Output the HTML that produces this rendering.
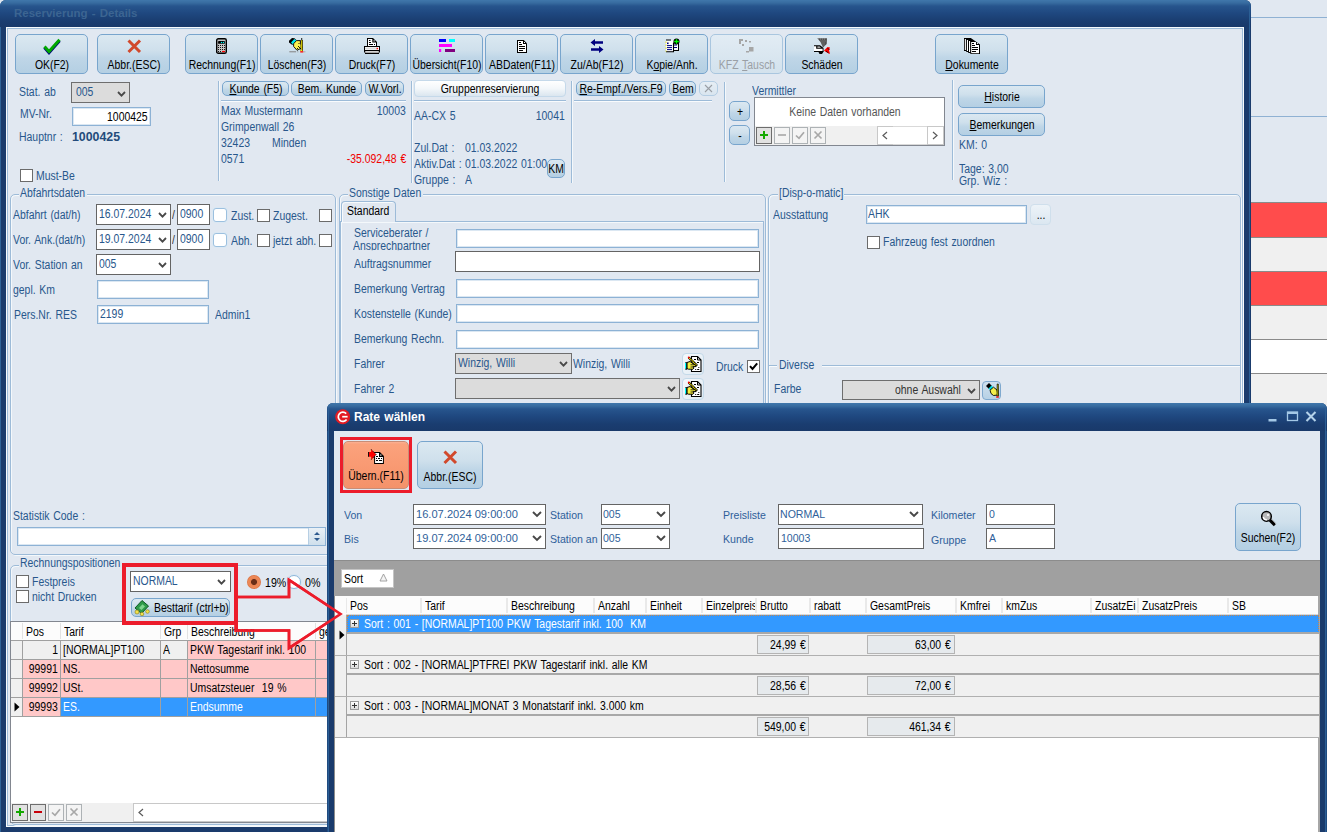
<!DOCTYPE html>
<html><head><meta charset="utf-8"><title>Reservierung - Details</title>
<style>
html,body{margin:0;padding:0}
body{width:1327px;height:832px;overflow:hidden;position:relative;background:#e1e8f1;font-family:"Liberation Sans",sans-serif}
div,span,svg{position:absolute;box-sizing:border-box}
.t{white-space:nowrap;font-family:"Liberation Sans",sans-serif;word-spacing:1px}
.btn{border:1px solid #78a5cd;border-radius:5px;background:linear-gradient(#dbe8f1 0%,#cfe0ec 40%,#bfd6e7 60%,#b4cfe3 100%)}
.btnw{border:1px solid #c5d9ea;border-radius:4px;background:linear-gradient(#ffffff 0%,#f3f7fa 50%,#dbe6ef 100%)}
.inp{background:#fff;border:1px solid #8db2d5;box-shadow:inset 0 0 0 1px #dbe7f2}
.inpd{background:#fff;border:1px solid #646464}
.sel{background:#fff;border:1px solid #646464}
.selg{background:#dcdcdc;border:1px solid #6e6e6e}
.cb{background:#fff;border:1px solid #6b6b6b}
.cbb{background:#fff;border:1px solid #9cc0df;border-radius:3px;box-shadow:0 0 0 1px #dbe8f3}
.grp{border:1px solid #9dbbd8;border-radius:5px;box-shadow:inset 1px 1px 0 #f4f8fb, 1px 1px 0 #f4f8fb}
</style></head><body>
<div style="left:1251px;top:17px;width:76px;height:1px;background:#8fb1d3;"></div>
<div style="left:1251px;top:116px;width:76px;height:1px;background:#8fb1d3;"></div>
<div style="left:1251px;top:202px;width:76px;height:1px;background:#8a8a8a;"></div>
<div style="left:1251px;top:203px;width:76px;height:34px;background:#ff4c4c;"></div>
<div style="left:1251px;top:237px;width:76px;height:1px;background:#8a8a8a;"></div>
<div style="left:1251px;top:238px;width:76px;height:33px;background:#f0f0f0;"></div>
<div style="left:1251px;top:271px;width:76px;height:1px;background:#8a8a8a;"></div>
<div style="left:1251px;top:272px;width:76px;height:33px;background:#ff4c4c;"></div>
<div style="left:1251px;top:305px;width:76px;height:1px;background:#8a8a8a;"></div>
<div style="left:1251px;top:306px;width:76px;height:33px;background:#f0f0f0;"></div>
<div style="left:1251px;top:339px;width:76px;height:1px;background:#8a8a8a;"></div>
<div style="left:1251px;top:340px;width:76px;height:33px;background:#ffffff;"></div>
<div style="left:1251px;top:373px;width:76px;height:1px;background:#8a8a8a;"></div>
<div style="left:1251px;top:374px;width:76px;height:40px;background:#f0f0f0;"></div>
<div style="left:0px;top:0px;width:1251px;height:832px;background:#1a3b6c;border-radius:6px 6px 0 0;border-left:1px solid #2f6398;"></div>
<div style="left:0px;top:0px;width:1251px;height:27px;border-radius:6px 6px 0 0;background:linear-gradient(#4077ab 0px,#376b9f 3px,#27558d 6px,#1f4880 13px,#1a3d70 21px,#19396a 27px);"></div>
<span class="t" style="top:6.5px;font-size:11.5px;line-height:13px;color:#3c6592;font-weight:bold;left:14px;transform:scaleX(1.0);transform-origin:0 0;">Reservierung - Details</span>
<div style="left:1249px;top:4px;width:1px;height:828px;background:#2b5f95;"></div>
<div style="left:6px;top:27px;width:1238px;height:800px;background:#e1e8f1;border:1px solid #f7fafc;box-shadow:inset 0 0 0 1px #9dbbd8;"></div>
<div class="btn" style="left:15px;top:34px;width:73px;height:40px;"></div>
<span class="t" style="top:57.7px;font-size:12.5px;line-height:14px;color:#000;left:-148.5px;width:400px;text-align:center;transform:scaleX(0.835);transform-origin:50% 0;">OK(F2)</span>
<svg style="left:40px;top:38px" width="22" height="17" viewBox="0 0 22 17"><polyline points="4.5,8.5 9,13.5 19.5,1.8" fill="none" stroke="#000080" stroke-width="3.2" transform="translate(0,1)"/><polyline points="4.5,8.5 9,13.5 19.5,1.8" fill="none" stroke="#00a800" stroke-width="3"/></svg>
<div class="btn" style="left:97px;top:34px;width:73px;height:40px;"></div>
<span class="t" style="top:57.7px;font-size:12.5px;line-height:14px;color:#000;left:-66.5px;width:400px;text-align:center;transform:scaleX(0.835);transform-origin:50% 0;">Abbr.(ESC)</span>
<svg style="left:127px;top:39px" width="15" height="15" viewBox="0 0 15 15"><path d="M1.5 1.5 L13 13 M13 1.5 L1.5 13" stroke="#d1492c" stroke-width="3" fill="none"/></svg>
<div class="btn" style="left:185px;top:34px;width:73px;height:40px;"></div>
<span class="t" style="top:57.7px;font-size:12.5px;line-height:14px;color:#000;left:21.5px;width:400px;text-align:center;transform:scaleX(0.835);transform-origin:50% 0;">Rechnung(F1)</span>
<svg style="left:216px;top:38px" width="11" height="16" viewBox="0 0 11 16"><rect x=".7" y=".7" width="9.6" height="14.6" rx="1.6" fill="#c6c6c6" stroke="#000" stroke-width="1.4"/><rect x="2.1" y="3.1" width="6.8" height="2.7" rx=".4" fill="#000"/><rect x="4.9" y="3.9" width="1.2" height="1.2" fill="#0ff"/><rect x="6.9" y="3.9" width="1.2" height="1.2" fill="#0ff"/><rect x="2" y="7" width="1" height="1" fill="#111"/><rect x="2" y="9" width="1" height="1" fill="#111"/><rect x="2" y="11" width="1" height="1" fill="#111"/><rect x="4" y="7" width="1" height="1" fill="#111"/><rect x="4" y="9" width="1" height="1" fill="#111"/><rect x="4" y="11" width="1" height="1" fill="#111"/><rect x="6" y="7" width="1" height="1" fill="#111"/><rect x="6" y="9" width="1" height="1" fill="#111"/><rect x="6" y="11" width="1" height="1" fill="#111"/><rect x="8" y="7" width="1" height="1" fill="#111"/><rect x="8" y="9" width="1" height="1" fill="#111"/><rect x="8" y="11" width="1" height="1" fill="#111"/><rect x="2" y="13" width="1" height="1" fill="#111"/><rect x="4" y="13" width="1" height="1" fill="#111"/><rect x="6" y="12.9" width="3" height="1.2" fill="#f00"/></svg>
<div class="btn" style="left:260px;top:34px;width:73px;height:40px;"></div>
<span class="t" style="top:57.7px;font-size:12.5px;line-height:14px;color:#000;left:96.5px;width:400px;text-align:center;transform:scaleX(0.835);transform-origin:50% 0;">L&ouml;schen(F3)</span>
<svg style="left:289px;top:38px" width="17" height="16" viewBox="0 0 17 16"><path d="M0 2.8 L3 0 L5.5 .3 L7.3 2 L3.3 7 L0 4.5 Z" fill="#000"/><path d="M5.3 .9 L7.6 2.6 L3.9 6.5 L2 4.6 Z" fill="#00e8f0"/><path d="M7.4 2.6 H11.3 V4.2 L13.4 9.6 L8 12.3 L4.6 8.4 V5.8 Z" fill="#fbf250" stroke="#000" stroke-width=".9"/><path d="M9.5 5 L10.5 6 M9 8 L11.5 10.5 M8 10 L9 11" stroke="#000" stroke-width=".9"/><path d="M11.6 2 H13.9 V13 H11.6 Z" fill="#000"/><rect x="12.2" y="2.2" width="1.1" height="9.8" fill="#ffee00"/><rect x="12.3" y="0" width=".9" height="2" fill="#000"/><rect x="11.6" y="12" width="1.8" height="1.2" fill="#ffee00"/><rect x="11.2" y="13.2" width="3.2" height="1.3" fill="#f00"/><rect x=".3" y="13.3" width="6.8" height="1" fill="#808080"/><rect x="8.4" y="13.4" width=".9" height=".9" fill="#808080"/><rect x="15.4" y="13.4" width=".9" height=".9" fill="#808080"/></svg>
<div class="btn" style="left:335px;top:34px;width:73px;height:40px;"></div>
<span class="t" style="top:57.7px;font-size:12.5px;line-height:14px;color:#000;left:171.5px;width:400px;text-align:center;transform:scaleX(0.835);transform-origin:50% 0;">Druck(F7)</span>
<svg style="left:364px;top:38px" width="16" height="16" viewBox="0 0 16 16"><path d="M3 0 H9 L13 4 V9 H3 Z" fill="#000"/><path d="M4 1 H8.3 V4.6 H12 V8.5 H4 Z" fill="#fff"/><rect x="9.5" y="2.3" width="1.2" height="1.2" fill="#fff"/><path d="M5 2.5 h1.5 M5 4.5 h2 M5 6.5 h4 M10 6.5 h1" stroke="#000" stroke-width="1"/><path d="M0 8 H16 V14.5 H15 V16 H1 V14.5 H0 Z" fill="#000"/><rect x="1" y="9" width="14" height="3" fill="#fff"/><path d="M1.5 10.5 H12.5" stroke="#bbb" stroke-width="2" stroke-dasharray="1 1"/><rect x="12.6" y="9.8" width="1.5" height="1.5" fill="#f00"/><rect x="1.2" y="13" width="13.6" height="1.8" fill="#d4d4d4"/></svg>
<div class="btn" style="left:410px;top:34px;width:73px;height:40px;"></div>
<span class="t" style="top:57.7px;font-size:12.5px;line-height:14px;color:#000;left:246.5px;width:400px;text-align:center;transform:scaleX(0.835);transform-origin:50% 0;">&Uuml;bersicht(F10)</span>
<svg style="left:438px;top:38px" width="18" height="15" viewBox="0 0 18 15"><rect x="1" y="1" width="7" height="3" fill="#00f"/><rect x="11" y="1" width="6" height="3" fill="#0ff"/><rect x="1" y="6" width="13" height="3" fill="#f0f"/><rect x="1" y="11" width="2.2" height="3" fill="#f0f"/><rect x="7" y="11" width="10" height="3" fill="#800080"/></svg>
<div class="btn" style="left:485px;top:34px;width:73px;height:40px;"></div>
<span class="t" style="top:57.7px;font-size:12.5px;line-height:14px;color:#000;left:321.5px;width:400px;text-align:center;transform:scaleX(0.835);transform-origin:50% 0;">ABDaten(F11)</span>
<svg style="left:517px;top:40px" width="10" height="13" viewBox="0 0 10 13"><path d="M0 0 H6.8 L10 3.5 V13 H0 Z" fill="#000"/><path d="M1 1 H6 V4 H9 V12 H1 Z" fill="#fff"/><rect x="7" y="2" width="1" height="1" fill="#fff"/><path d="M2 2.5 h2 M2 4.5 h3 M2 6.5 h6 M2 8.5 h6 M2 10.5 h4" stroke="#000" stroke-width="1"/></svg>
<div class="btn" style="left:560px;top:34px;width:73px;height:40px;"></div>
<span class="t" style="top:57.7px;font-size:12.5px;line-height:14px;color:#000;left:396.5px;width:400px;text-align:center;transform:scaleX(0.835);transform-origin:50% 0;">Zu/Ab(F12)</span>
<svg style="left:590px;top:39px" width="14" height="14" viewBox="0 0 14 14"><path d="M0.5 3.5 L5 0 V2.2 H13 V4.8 H5 V7 Z" fill="#000080"/><path d="M13.5 10.5 L9 7 V9.2 H1 V11.8 H9 V14 Z" fill="#000080"/></svg>
<div class="btn" style="left:635px;top:34px;width:73px;height:40px;"></div>
<span class="t" style="top:57.7px;font-size:12.5px;line-height:14px;color:#000;left:471.5px;width:400px;text-align:center;transform:scaleX(0.835);transform-origin:50% 0;">K<u>o</u>pie/Anh.</span>
<svg style="left:665px;top:38px" width="16" height="16" viewBox="0 0 16 16"><rect x="6.5" y="4.5" width="7" height="8" fill="#fff" stroke="#000" stroke-width="1"/><path d="M8 7 h4 M8 9.5 h4" stroke="#000080" stroke-width="1"/><rect x="1" y="2.5" width="7.5" height="11" fill="#fff"/><path d="M1 2 H6 M8.5 5 V13.8 H1" fill="none" stroke="#000" stroke-width="1.1"/><rect x="2" y="4.5" width="1.6" height="1.6" fill="#000080"/><path d="M2 7.6 h5 M2 9.6 h5 M2 11.6 h5" stroke="#000080" stroke-width="1"/><path d="M1 3.5 v10" stroke="#f0e000" stroke-width="1" stroke-dasharray="1.5 1.5"/><circle cx="11.5" cy="3.5" r="3" fill="#000"/><path d="M11.5 1.2 v4.6 M9.2 3.5 h4.6" stroke="#0f0" stroke-width="1.3"/></svg>
<div class="btn" style="left:710px;top:34px;width:73px;height:40px;background:linear-gradient(#e2ecf4,#d3e2ed);border-color:#a9c6df;"></div>
<span class="t" style="top:57.7px;font-size:12.5px;line-height:14px;color:#9a9fa5;left:546.5px;width:400px;text-align:center;transform:scaleX(0.835);transform-origin:50% 0;">KFZ <u>T</u>ausch</span>
<svg style="left:737px;top:38px" width="18" height="16" viewBox="0 0 18 16"><path d="M2 1 H6 V3 H4 V6 H2 Z M8 2 h2 v2 h-2z M12 3 h2 v1.5 h-2z" fill="#a6a6a6"/><path d="M12 9 H16.5 V13.5 H12 Z M9 13 h3 v1.5 h-3z M5 6 h2 v2 h-2z" fill="#a6a6a6"/></svg>
<div class="btn" style="left:785px;top:34px;width:73px;height:40px;"></div>
<span class="t" style="top:57.7px;font-size:12.5px;line-height:14px;color:#000;left:621.5px;width:400px;text-align:center;transform:scaleX(0.835);transform-origin:50% 0;">Sch&auml;den</span>
<svg style="left:814px;top:38px" width="16" height="16" viewBox="0 0 16 16"><path d="M3.3 .3 H13 L12.7 6 L9 9.5 L6.5 4 Z" fill="#4e4e4e"/><path d="M4 1 h8 M6.5 3 l5 0 M7.5 5 l4 0 M8.5 7 l2.5 0" stroke="#aaa" stroke-width=".8" stroke-dasharray="1 1"/><path d="M0 7.2 H6 L9.5 10 V13 H10 L8 16 H5.5 L4.5 14 H0 Z" fill="#000"/><path d="M0 8.2 H2.2 V10.8 H8.6 V12.9 H0 Z" fill="#fff"/><path d="M3.4 8.6 H5.6 L7 9.8 H3.4 Z" fill="#ddd"/><path d="M10 12.5 L13.5 9 L16 9.5 L15 12 L16 16 L13 14.5 L11.5 13.8 Z" fill="#f00"/><path d="M13.5 10 L15.5 12 M12 13 L14.5 15" stroke="#300" stroke-width=".9"/></svg>
<div class="btn" style="left:935px;top:34px;width:73px;height:40px;"></div>
<span class="t" style="top:57.7px;font-size:12.5px;line-height:14px;color:#000;left:771.5px;width:400px;text-align:center;transform:scaleX(0.835);transform-origin:50% 0;"><u>D</u>okumente</span>
<svg style="left:964px;top:38px" width="16" height="16" viewBox="0 0 16 16"><path d="M0 0 H6.8 L16 6.5 V16 H6.4 V15 H4.2 V14 H2.2 V13 H0 Z" fill="#000"/><rect x=".8" y="1" width="1.1" height="11" fill="#fff"/><rect x="2.9" y="2" width="1.1" height="11" fill="#fff"/><rect x="5" y="3" width="1.1" height="11" fill="#fff"/><path d="M7.2 4 H12 V7 H15 V15.2 H7.2 Z" fill="#fff"/><rect x="12.9" y="5" width="1" height="1" fill="#fff"/><path d="M8 5.5 h2 M8 7.5 h3 M8 9.5 h6 M8 11.5 h6 M8 13.5 h4" stroke="#000" stroke-width="1"/></svg>
<span class="t" style="top:84.7px;font-size:12.5px;line-height:14px;color:#28578c;left:19px;transform:scaleX(0.835);transform-origin:0 0;">Stat. ab</span>
<div class="selg" style="left:71px;top:82px;width:59px;height:21px;"></div>
<span class="t" style="top:84.7px;font-size:12.5px;line-height:14px;color:#28578c;left:76px;transform:scaleX(0.835);transform-origin:0 0;">005</span>
<svg style="left:117px;top:91px" width="9" height="6" viewBox="0 0 9 6"><path d="M1 1 L4.5 4.6 L8 1" fill="none" stroke="#484848" stroke-width="1.8"/></svg>
<span class="t" style="top:106.7px;font-size:12.5px;line-height:14px;color:#28578c;left:19.5px;transform:scaleX(0.835);transform-origin:0 0;">MV-Nr.</span>
<div class="inp" style="left:72px;top:107px;width:79px;height:19px;"></div>
<span class="t" style="top:109.7px;font-size:12.5px;line-height:14px;color:#000;right:1179px;transform:scaleX(0.835);transform-origin:100% 0;">1000425</span>
<span class="t" style="top:129.7px;font-size:12.5px;line-height:14px;color:#28578c;left:19px;transform:scaleX(0.835);transform-origin:0 0;">Hauptnr :</span>
<span class="t" style="top:129.0px;font-size:13px;line-height:15px;color:#234b7b;font-weight:bold;left:72px;transform:scaleX(0.95);transform-origin:0 0;">1000425</span>
<div class="cb" style="left:20px;top:169px;width:13px;height:13px;"></div>
<span class="t" style="top:168.7px;font-size:12.5px;line-height:14px;color:#28578c;left:36px;transform:scaleX(0.835);transform-origin:0 0;">Must-Be</span>
<div style="left:218px;top:81px;width:1px;height:100px;background:#9dbbd8;"></div>
<div style="left:219px;top:81px;width:1px;height:100px;background:#f4f8fb;"></div>
<div class="btn" style="left:222px;top:81px;width:67px;height:15px;"></div>
<span class="t" style="top:81.7px;font-size:12.5px;line-height:14px;color:#000;left:55.5px;width:400px;text-align:center;transform:scaleX(0.835);transform-origin:50% 0;"><u>K</u>unde (F5)</span>
<div class="btn" style="left:291px;top:81px;width:71px;height:15px;"></div>
<span class="t" style="top:81.7px;font-size:12.5px;line-height:14px;color:#000;left:126.5px;width:400px;text-align:center;transform:scaleX(0.835);transform-origin:50% 0;">Bem. Kunde</span>
<div class="btn" style="left:365px;top:81px;width:39px;height:15px;"></div>
<span class="t" style="top:81.7px;font-size:12.5px;line-height:14px;color:#000;left:184.5px;width:400px;text-align:center;transform:scaleX(0.835);transform-origin:50% 0;">W.Vorl.</span>
<div style="left:221px;top:100px;width:185px;height:1px;background:#9dbbd8;"></div>
<div style="left:221px;top:101px;width:185px;height:1px;background:#f9fbfd;"></div>
<span class="t" style="top:103.7px;font-size:12.5px;line-height:14px;color:#28578c;left:221px;transform:scaleX(0.835);transform-origin:0 0;">Max Mustermann</span>
<span class="t" style="top:103.7px;font-size:12.5px;line-height:14px;color:#28578c;right:921px;transform:scaleX(0.835);transform-origin:100% 0;">10003</span>
<span class="t" style="top:119.7px;font-size:12.5px;line-height:14px;color:#28578c;left:221px;transform:scaleX(0.835);transform-origin:0 0;">Grimpenwall 26</span>
<span class="t" style="top:135.7px;font-size:12.5px;line-height:14px;color:#28578c;left:221px;transform:scaleX(0.835);transform-origin:0 0;">32423</span>
<span class="t" style="top:135.7px;font-size:12.5px;line-height:14px;color:#28578c;left:272px;transform:scaleX(0.835);transform-origin:0 0;">Minden</span>
<span class="t" style="top:151.7px;font-size:12.5px;line-height:14px;color:#28578c;left:221px;transform:scaleX(0.835);transform-origin:0 0;">0571</span>
<span class="t" style="top:151.7px;font-size:12.5px;line-height:14px;color:#f00000;right:921px;transform:scaleX(0.835);transform-origin:100% 0;">-35.092,48 &euro;</span>
<div style="left:411px;top:81px;width:1px;height:102px;background:#9dbbd8;"></div>
<div style="left:412px;top:81px;width:1px;height:102px;background:#f4f8fb;"></div>
<div class="btnw" style="left:414px;top:80px;width:152px;height:17px;"></div>
<span class="t" style="top:81.7px;font-size:12.5px;line-height:14px;color:#000;left:290.0px;width:400px;text-align:center;transform:scaleX(0.835);transform-origin:50% 0;">Gruppenreservierung</span>
<div style="left:414px;top:100px;width:152px;height:1px;background:#9dbbd8;"></div>
<div style="left:414px;top:101px;width:152px;height:1px;background:#f9fbfd;"></div>
<span class="t" style="top:108.7px;font-size:12.5px;line-height:14px;color:#28578c;left:414px;transform:scaleX(0.835);transform-origin:0 0;">AA-CX 5</span>
<span class="t" style="top:108.7px;font-size:12.5px;line-height:14px;color:#28578c;right:762px;transform:scaleX(0.835);transform-origin:100% 0;">10041</span>
<span class="t" style="top:140.7px;font-size:12.5px;line-height:14px;color:#28578c;left:414px;transform:scaleX(0.835);transform-origin:0 0;">Zul.Dat :</span>
<span class="t" style="top:140.7px;font-size:12.5px;line-height:14px;color:#28578c;left:465px;transform:scaleX(0.835);transform-origin:0 0;">01.03.2022</span>
<span class="t" style="top:156.7px;font-size:12.5px;line-height:14px;color:#28578c;left:414px;transform:scaleX(0.835);transform-origin:0 0;">Aktiv.Dat :</span>
<span class="t" style="top:156.7px;font-size:12.5px;line-height:14px;color:#28578c;left:465px;transform:scaleX(0.835);transform-origin:0 0;">01.03.2022 01:00</span>
<span class="t" style="top:172.7px;font-size:12.5px;line-height:14px;color:#28578c;left:414px;transform:scaleX(0.835);transform-origin:0 0;">Gruppe :</span>
<span class="t" style="top:172.7px;font-size:12.5px;line-height:14px;color:#28578c;left:465px;transform:scaleX(0.835);transform-origin:0 0;">A</span>
<div class="btn" style="left:547px;top:159px;width:18px;height:19px;"></div>
<span class="t" style="top:161.7px;font-size:12.5px;line-height:14px;color:#000;left:356.0px;width:400px;text-align:center;transform:scaleX(0.835);transform-origin:50% 0;">KM</span>
<div style="left:571px;top:81px;width:1px;height:102px;background:#9dbbd8;"></div>
<div style="left:572px;top:81px;width:1px;height:102px;background:#f4f8fb;"></div>
<div class="btn" style="left:576px;top:81px;width:90px;height:15px;"></div>
<span class="t" style="top:81.7px;font-size:12.5px;line-height:14px;color:#000;left:421.0px;width:400px;text-align:center;transform:scaleX(0.835);transform-origin:50% 0;"><u>R</u>e-Empf./Vers.F9</span>
<div class="btn" style="left:669px;top:81px;width:27px;height:15px;"></div>
<span class="t" style="top:81.7px;font-size:12.5px;line-height:14px;color:#000;left:482.5px;width:400px;text-align:center;transform:scaleX(0.835);transform-origin:50% 0;">Bem</span>
<div class="btn" style="left:699px;top:81px;width:19px;height:15px;background:linear-gradient(#e6eef5,#d9e5ef);border-color:#b4cde3;"></div>
<svg style="left:704px;top:84px" width="9" height="9" viewBox="0 0 9 9"><path d="M1 1 L8 8 M8 1 L1 8" stroke="#9a9fa5" stroke-width="1.1" fill="none"/></svg>
<div style="left:574px;top:100px;width:138px;height:1px;background:#9dbbd8;"></div>
<div style="left:574px;top:101px;width:138px;height:1px;background:#f9fbfd;"></div>
<div style="left:724px;top:82px;width:1px;height:100px;background:#9dbbd8;"></div>
<div style="left:725px;top:82px;width:1px;height:100px;background:#f4f8fb;"></div>
<span class="t" style="top:83.7px;font-size:12.5px;line-height:14px;color:#28578c;left:752px;transform:scaleX(0.835);transform-origin:0 0;">Vermittler</span>
<div class="btn" style="left:729px;top:101px;width:21px;height:20px;"></div>
<span class="t" style="top:104.7px;font-size:12.5px;line-height:14px;color:#000;left:539.5px;width:400px;text-align:center;transform:scaleX(0.835);transform-origin:50% 0;">+</span>
<div class="btn" style="left:729px;top:125px;width:21px;height:20px;"></div>
<span class="t" style="top:128.7px;font-size:12.5px;line-height:14px;color:#000;left:539.5px;width:400px;text-align:center;transform:scaleX(0.835);transform-origin:50% 0;">-</span>
<div style="left:754px;top:97px;width:191px;height:49px;background:#fff;border:1px solid #828790;"></div>
<span class="t" style="top:104.7px;font-size:12.5px;line-height:14px;color:#555;left:645px;width:400px;text-align:center;transform:scaleX(0.835);transform-origin:50% 0;">Keine Daten vorhanden</span>
<div style="left:755px;top:126px;width:189px;height:19px;background:#f0f0f0;"></div>
<div style="left:756px;top:127px;width:16px;height:17px;background:#e1e1e1;border:1px solid #6d6d6d;"></div>
<svg style="left:759px;top:130px" width="10" height="10" viewBox="0 0 10 10"><path d="M5 1 V9 M1 5 H9" stroke="#14a800" stroke-width="2" fill="none"/></svg>
<div style="left:774px;top:127px;width:16px;height:17px;background:#f4f4f4;border:1px solid #adb2b5;"></div>
<svg style="left:777px;top:130px" width="10" height="10" viewBox="0 0 10 10"><path d="M1 5 H9" stroke="#a8a8a8" stroke-width="1.6" fill="none"/></svg>
<div style="left:792px;top:127px;width:16px;height:17px;background:#f4f4f4;border:1px solid #adb2b5;"></div>
<svg style="left:795px;top:130px" width="10" height="10" viewBox="0 0 10 10"><path d="M1 5.5 L4 8.3 L9 2.2" stroke="#a8a8a8" stroke-width="1.7" fill="none"/></svg>
<div style="left:810px;top:127px;width:16px;height:17px;background:#f4f4f4;border:1px solid #adb2b5;"></div>
<svg style="left:813px;top:130px" width="10" height="10" viewBox="0 0 10 10"><path d="M1.5 1.5 L8.5 8.5 M8.5 1.5 L1.5 8.5" stroke="#a8a8a8" stroke-width="1.7" fill="none"/></svg>
<div style="left:877px;top:126px;width:17px;height:19px;background:#fff;border:1px solid #c8c8c8;"></div>
<svg style="left:881px;top:131px" width="8" height="9" viewBox="0 0 8 9"><path d="M6 1 L2 4.5 L6 8" stroke="#5a5a5a" stroke-width="1.2" fill="none"/></svg>
<div style="left:893px;top:126px;width:35px;height:19px;background:#fff;border-top:1px solid #d9d9d9;border-bottom:1px solid #d9d9d9;"></div>
<div style="left:927px;top:126px;width:17px;height:19px;background:#fff;border:1px solid #c8c8c8;"></div>
<svg style="left:931px;top:131px" width="8" height="9" viewBox="0 0 8 9"><path d="M2 1 L6 4.5 L2 8" stroke="#5a5a5a" stroke-width="1.2" fill="none"/></svg>
<div style="left:952px;top:80px;width:1px;height:100px;background:#9dbbd8;"></div>
<div style="left:953px;top:80px;width:1px;height:100px;background:#f4f8fb;"></div>
<div class="btn" style="left:958px;top:85px;width:87px;height:23px;"></div>
<span class="t" style="top:89.7px;font-size:12.5px;line-height:14px;color:#000;left:801.5px;width:400px;text-align:center;transform:scaleX(0.835);transform-origin:50% 0;"><u>H</u>istorie</span>
<div class="btn" style="left:958px;top:113px;width:87px;height:23px;"></div>
<span class="t" style="top:117.7px;font-size:12.5px;line-height:14px;color:#000;left:801.5px;width:400px;text-align:center;transform:scaleX(0.835);transform-origin:50% 0;"><u>B</u>emerkungen</span>
<span class="t" style="top:137.7px;font-size:12.5px;line-height:14px;color:#28578c;left:959px;transform:scaleX(0.835);transform-origin:0 0;">KM: 0</span>
<span class="t" style="top:161.7px;font-size:12.5px;line-height:14px;color:#28578c;left:959px;transform:scaleX(0.835);transform-origin:0 0;">Tage: 3,00</span>
<span class="t" style="top:173.7px;font-size:12.5px;line-height:14px;color:#28578c;left:959px;transform:scaleX(0.835);transform-origin:0 0;">Grp. Wiz :</span>
<div class="grp" style="left:10px;top:194px;width:326px;height:361px;"></div>
<div style="left:19px;top:192px;width:68px;height:5px;background:#e1e8f1;"></div>
<span class="t" style="top:186.2px;font-size:12.5px;line-height:14px;color:#28578c;left:20px;transform:scaleX(0.835);transform-origin:0 0;">Abfahrtsdaten</span>
<span class="t" style="top:207.7px;font-size:12.5px;line-height:14px;color:#28578c;left:13px;transform:scaleX(0.835);transform-origin:0 0;">Abfahrt (dat/h)</span>
<div class="sel" style="left:96px;top:204px;width:75px;height:21px;"></div>
<span class="t" style="top:206.7px;font-size:12.5px;line-height:14px;color:#28578c;left:99px;transform:scaleX(0.835);transform-origin:0 0;">16.07.2024</span>
<svg style="left:158px;top:212px" width="9" height="6" viewBox="0 0 9 6"><path d="M1 1 L4.5 4.6 L8 1" fill="none" stroke="#484848" stroke-width="1.8"/></svg>
<span class="t" style="top:207.7px;font-size:12.5px;line-height:14px;color:#333;left:172px;transform:scaleX(0.835);transform-origin:0 0;">/</span>
<div class="sel" style="left:177px;top:204px;width:33px;height:21px;"></div>
<span class="t" style="top:206.7px;font-size:12.5px;line-height:14px;color:#28578c;left:180px;transform:scaleX(0.835);transform-origin:0 0;">0900</span>
<div class="cbb" style="left:213px;top:208px;width:14px;height:14px;"></div>
<span class="t" style="top:208.7px;font-size:12.5px;line-height:14px;color:#28578c;left:230.5px;transform:scaleX(0.835);transform-origin:0 0;">Zust.</span>
<div class="cb" style="left:257px;top:209px;width:13px;height:13px;"></div>
<span class="t" style="top:208.7px;font-size:12.5px;line-height:14px;color:#28578c;left:272.5px;transform:scaleX(0.835);transform-origin:0 0;">Zugest.</span>
<div class="cb" style="left:319px;top:209px;width:13px;height:13px;"></div>
<span class="t" style="top:232.7px;font-size:12.5px;line-height:14px;color:#28578c;left:13px;transform:scaleX(0.835);transform-origin:0 0;">Vor. Ank.(dat/h)</span>
<div class="sel" style="left:96px;top:229px;width:75px;height:21px;"></div>
<span class="t" style="top:231.7px;font-size:12.5px;line-height:14px;color:#28578c;left:99px;transform:scaleX(0.835);transform-origin:0 0;">19.07.2024</span>
<svg style="left:158px;top:237px" width="9" height="6" viewBox="0 0 9 6"><path d="M1 1 L4.5 4.6 L8 1" fill="none" stroke="#484848" stroke-width="1.8"/></svg>
<span class="t" style="top:232.7px;font-size:12.5px;line-height:14px;color:#333;left:172px;transform:scaleX(0.835);transform-origin:0 0;">/</span>
<div class="sel" style="left:177px;top:229px;width:33px;height:21px;"></div>
<span class="t" style="top:231.7px;font-size:12.5px;line-height:14px;color:#28578c;left:180px;transform:scaleX(0.835);transform-origin:0 0;">0900</span>
<div class="cbb" style="left:213px;top:233px;width:14px;height:14px;"></div>
<span class="t" style="top:233.7px;font-size:12.5px;line-height:14px;color:#28578c;left:230.5px;transform:scaleX(0.835);transform-origin:0 0;">Abh.</span>
<div class="cb" style="left:257px;top:234px;width:13px;height:13px;"></div>
<span class="t" style="top:233.7px;font-size:12.5px;line-height:14px;color:#28578c;left:273px;transform:scaleX(0.835);transform-origin:0 0;">jetzt abh.</span>
<div class="cb" style="left:319px;top:234px;width:13px;height:13px;"></div>
<span class="t" style="top:257.7px;font-size:12.5px;line-height:14px;color:#28578c;left:13px;transform:scaleX(0.835);transform-origin:0 0;">Vor. Station an</span>
<div class="sel" style="left:96px;top:254px;width:75px;height:21px;"></div>
<span class="t" style="top:256.7px;font-size:12.5px;line-height:14px;color:#28578c;left:99px;transform:scaleX(0.835);transform-origin:0 0;">005</span>
<svg style="left:158px;top:262px" width="9" height="6" viewBox="0 0 9 6"><path d="M1 1 L4.5 4.6 L8 1" fill="none" stroke="#484848" stroke-width="1.8"/></svg>
<span class="t" style="top:282.7px;font-size:12.5px;line-height:14px;color:#28578c;left:13px;transform:scaleX(0.835);transform-origin:0 0;">gepl. Km</span>
<div class="inp" style="left:97px;top:280px;width:112px;height:19px;"></div>
<span class="t" style="top:307.7px;font-size:12.5px;line-height:14px;color:#28578c;left:13.5px;transform:scaleX(0.835);transform-origin:0 0;">Pers.Nr. RES</span>
<div class="inp" style="left:97px;top:305px;width:112px;height:19px;"></div>
<span class="t" style="top:306.7px;font-size:12.5px;line-height:14px;color:#28578c;left:100px;transform:scaleX(0.835);transform-origin:0 0;">2199</span>
<span class="t" style="top:307.7px;font-size:12.5px;line-height:14px;color:#28578c;left:215px;transform:scaleX(0.835);transform-origin:0 0;">Admin1</span>
<span class="t" style="top:508.7px;font-size:12.5px;line-height:14px;color:#28578c;left:13px;transform:scaleX(0.835);transform-origin:0 0;">Statistik Code :</span>
<div class="inp" style="left:17px;top:527px;width:309px;height:19px;"></div>
<div style="left:308px;top:528px;width:17px;height:17px;background:linear-gradient(#e9f0f6,#cfdfec);border-left:1px solid #b7cfe4;"></div>
<svg style="left:313px;top:531px" width="8" height="11" viewBox="0 0 8 11"><path d="M1 4 L4 1 L7 4 Z M1 7 L4 10 L7 7 Z" fill="#2f5b8f"/></svg>
<div class="grp" style="left:339px;top:194px;width:427px;height:300px;"></div>
<div style="left:348px;top:192px;width:75px;height:5px;background:#e1e8f1;"></div>
<span class="t" style="top:186.2px;font-size:12.5px;line-height:14px;color:#28578c;left:349px;transform:scaleX(0.835);transform-origin:0 0;">Sonstige Daten</span>
<div style="left:340px;top:221px;width:424px;height:260px;border:1px solid #9dbbd8;box-shadow:inset 1px 1px 0 #f4f8fb;"></div>
<div style="left:341px;top:201px;width:55px;height:21px;background:#e1e8f1;border:1px solid #9dbbd8;border-bottom:none;border-radius:4px 4px 0 0;box-shadow:inset 1px 1px 0 #f7fafc;"></div>
<span class="t" style="top:203.7px;font-size:12.5px;line-height:14px;color:#000;left:347px;transform:scaleX(0.835);transform-origin:0 0;">Standard</span>
<span class="t" style="top:225.7px;font-size:12.5px;line-height:14px;color:#28578c;left:354px;transform:scaleX(0.835);transform-origin:0 0;">Serviceberater /</span>
<span class="t" style="top:238.7px;font-size:12.5px;line-height:14px;color:#28578c;left:353px;transform:scaleX(0.835);transform-origin:0 0;clip-path:inset(0 0 2.5px 0);">Ansprechpartner</span>
<div class="inp" style="left:456px;top:229px;width:303px;height:19px;"></div>
<span class="t" style="top:256.7px;font-size:12.5px;line-height:14px;color:#28578c;left:354px;transform:scaleX(0.835);transform-origin:0 0;">Auftragsnummer</span>
<div class="inpd" style="left:455px;top:251px;width:305px;height:21px;"></div>
<span class="t" style="top:281.7px;font-size:12.5px;line-height:14px;color:#28578c;left:354px;transform:scaleX(0.835);transform-origin:0 0;">Bemerkung Vertrag</span>
<div class="inp" style="left:456px;top:279px;width:303px;height:19px;"></div>
<span class="t" style="top:306.7px;font-size:12.5px;line-height:14px;color:#28578c;left:354px;transform:scaleX(0.835);transform-origin:0 0;">Kostenstelle (Kunde)</span>
<div class="inp" style="left:456px;top:304px;width:303px;height:19px;"></div>
<span class="t" style="top:331.7px;font-size:12.5px;line-height:14px;color:#28578c;left:354px;transform:scaleX(0.835);transform-origin:0 0;">Bemerkung Rechn.</span>
<div class="inp" style="left:456px;top:330px;width:303px;height:19px;"></div>
<span class="t" style="top:356.7px;font-size:12.5px;line-height:14px;color:#28578c;left:354px;transform:scaleX(0.835);transform-origin:0 0;">Fahrer</span>
<div class="selg" style="left:455px;top:353px;width:117px;height:21px;"></div>
<span class="t" style="top:355.7px;font-size:12.5px;line-height:14px;color:#28578c;left:458px;transform:scaleX(0.835);transform-origin:0 0;">Winzig, Willi</span>
<svg style="left:559px;top:361px" width="9" height="6" viewBox="0 0 9 6"><path d="M1 1 L4.5 4.6 L8 1" fill="none" stroke="#484848" stroke-width="1.8"/></svg>
<span class="t" style="top:356.7px;font-size:12.5px;line-height:14px;color:#28578c;left:573px;transform:scaleX(0.835);transform-origin:0 0;">Winzig, Willi</span>
<div style="left:682px;top:353px;width:22px;height:22px;background:linear-gradient(135deg,#f6f9fc,#dfeaf3);border:1px solid #c3d9e9;border-radius:4px;"></div>
<svg style="left:685px;top:356px" width="17" height="16" viewBox="0 0 17 16"><path d="M6.5 .5 H12.5 L16 4 V15.5 H6.5 Z" fill="#fff" stroke="#000" stroke-width="1.1"/><path d="M12.5 .5 V4 H16" fill="none" stroke="#000" stroke-width="1"/><path d="M9 3.5 h2 M12 6.5 h2 M12.2 13.5 h2 M10.2 13.5 h1 M13.3 11.5 h1" stroke="#000" stroke-width="1.1"/><path d="M2 6.5 L5 5.5 L8.5 8 L12 9.5 L11 10.6 L8 10.6 L9 12 L8 13.2 L3.5 13.2 L2 12.5 Z" fill="#f8f040" stroke="#000" stroke-width="1"/><path d="M5.5 8.8 h4 M5.5 11 h2.5" stroke="#000" stroke-width=".8"/><rect x=".3" y="6.2" width="1.8" height="7.5" fill="#000"/><rect x="0" y="7" width="1.2" height="5.7" fill="#0ff"/><path d="M3.7 1.5 L12 9.6" stroke="#000" stroke-width="2.4"/><path d="M4.2 2 L11.8 9.4" stroke="#ffee00" stroke-width="1.1" stroke-dasharray="1.2 .6"/><circle cx="3.7" cy="1.5" r=".9" fill="#f00"/></svg>
<span class="t" style="top:359.7px;font-size:12.5px;line-height:14px;color:#28578c;left:716px;transform:scaleX(0.835);transform-origin:0 0;">Druck</span>
<div class="cb" style="left:747px;top:360px;width:13px;height:13px;"></div>
<svg style="left:748px;top:361px" width="11" height="11" viewBox="0 0 11 11"><path d="M2 5.2 L4.5 8 L9.2 2.4" stroke="#000" stroke-width="2" fill="none"/></svg>
<span class="t" style="top:381.7px;font-size:12.5px;line-height:14px;color:#28578c;left:354px;transform:scaleX(0.835);transform-origin:0 0;">Fahrer 2</span>
<div class="selg" style="left:455px;top:378px;width:225px;height:21px;"></div>
<svg style="left:667px;top:386px" width="9" height="6" viewBox="0 0 9 6"><path d="M1 1 L4.5 4.6 L8 1" fill="none" stroke="#484848" stroke-width="1.8"/></svg>
<div style="left:682px;top:378px;width:22px;height:22px;background:linear-gradient(135deg,#f6f9fc,#dfeaf3);border:1px solid #c3d9e9;border-radius:4px;"></div>
<svg style="left:685px;top:381px" width="17" height="16" viewBox="0 0 17 16"><path d="M6.5 .5 H12.5 L16 4 V15.5 H6.5 Z" fill="#fff" stroke="#000" stroke-width="1.1"/><path d="M12.5 .5 V4 H16" fill="none" stroke="#000" stroke-width="1"/><path d="M9 3.5 h2 M12 6.5 h2 M12.2 13.5 h2 M10.2 13.5 h1 M13.3 11.5 h1" stroke="#000" stroke-width="1.1"/><path d="M2 6.5 L5 5.5 L8.5 8 L12 9.5 L11 10.6 L8 10.6 L9 12 L8 13.2 L3.5 13.2 L2 12.5 Z" fill="#f8f040" stroke="#000" stroke-width="1"/><path d="M5.5 8.8 h4 M5.5 11 h2.5" stroke="#000" stroke-width=".8"/><rect x=".3" y="6.2" width="1.8" height="7.5" fill="#000"/><rect x="0" y="7" width="1.2" height="5.7" fill="#0ff"/><path d="M3.7 1.5 L12 9.6" stroke="#000" stroke-width="2.4"/><path d="M4.2 2 L11.8 9.4" stroke="#ffee00" stroke-width="1.1" stroke-dasharray="1.2 .6"/><circle cx="3.7" cy="1.5" r=".9" fill="#f00"/></svg>
<div class="grp" style="left:768px;top:194px;width:473px;height:300px;"></div>
<div style="left:778px;top:192px;width:66px;height:5px;background:#e1e8f1;"></div>
<span class="t" style="top:186.2px;font-size:12.5px;line-height:14px;color:#28578c;left:779px;transform:scaleX(0.835);transform-origin:0 0;">[Disp-o-matic]</span>
<span class="t" style="top:207.7px;font-size:12.5px;line-height:14px;color:#28578c;left:773px;transform:scaleX(0.835);transform-origin:0 0;">Ausstattung</span>
<div class="inp" style="left:866px;top:205px;width:161px;height:19px;"></div>
<span class="t" style="top:206.7px;font-size:12.5px;line-height:14px;color:#28578c;left:868px;transform:scaleX(0.835);transform-origin:0 0;">AHK</span>
<div style="left:1030px;top:204px;width:21px;height:21px;background:linear-gradient(#edf3f8,#dbe7f1);border:1px solid #cfdfec;border-radius:4px;"></div>
<span class="t" style="top:207.7px;font-size:12.5px;line-height:14px;color:#000;left:840.5px;width:400px;text-align:center;transform:scaleX(0.835);transform-origin:50% 0;">...</span>
<div class="cb" style="left:867px;top:236px;width:13px;height:13px;"></div>
<span class="t" style="top:234.7px;font-size:12.5px;line-height:14px;color:#28578c;left:883px;transform:scaleX(0.835);transform-origin:0 0;">Fahrzeug fest zuordnen</span>
<div style="left:769px;top:365px;width:8px;height:1px;background:#9dbbd8;"></div>
<div style="left:769px;top:366px;width:8px;height:1px;background:#f9fbfd;"></div>
<div style="left:822px;top:365px;width:418px;height:1px;background:#9dbbd8;"></div>
<div style="left:822px;top:366px;width:418px;height:1px;background:#f9fbfd;"></div>
<span class="t" style="top:357.7px;font-size:12.5px;line-height:14px;color:#28578c;left:779px;transform:scaleX(0.835);transform-origin:0 0;">Diverse</span>
<span class="t" style="top:381.7px;font-size:12.5px;line-height:14px;color:#28578c;left:774px;transform:scaleX(0.835);transform-origin:0 0;">Farbe</span>
<div class="selg" style="left:842px;top:380px;width:138px;height:20px;"></div>
<span class="t" style="top:382.7px;font-size:12.5px;line-height:14px;color:#333;right:366px;transform:scaleX(0.835);transform-origin:100% 0;">ohne Auswahl</span>
<svg style="left:967px;top:388px" width="9" height="6" viewBox="0 0 9 6"><path d="M1 1 L4.5 4.6 L8 1" fill="none" stroke="#484848" stroke-width="1.8"/></svg>
<div style="left:982px;top:381px;width:19px;height:19px;background:linear-gradient(#cfe0ee,#b7d1e5);border:1px solid #7fa9cf;border-radius:4px;"></div>
<svg style="left:984px;top:382px" width="16" height="17" viewBox="0 0 16 17"><path d="M2 4 L5 1 L8 4 L5 7 Z" fill="#000"/><path d="M4.5 6.5 L7.5 3.6 L9.3 5.4 L6.3 8.4 Z" fill="#00d8e0"/><path d="M6 8.2 L9.5 5.2 L13 8 L14 13 L9.5 13.5 L7 11.5 Z" fill="#f4ee4a" stroke="#000" stroke-width=".9"/><path d="M13.2 2 L14.3 2 L14.6 14 L13 14 Z" fill="#e8e000" stroke="#000" stroke-width=".7"/><rect x="12.2" y="14.3" width="2.6" height="1.4" fill="#f00"/></svg>
<div class="grp" style="left:10px;top:565px;width:330px;height:260px;"></div>
<div style="left:19px;top:563px;width:104px;height:5px;background:#e1e8f1;"></div>
<span class="t" style="top:556.2px;font-size:12.5px;line-height:14px;color:#28578c;left:20px;transform:scaleX(0.835);transform-origin:0 0;">Rechnungspositionen</span>
<div class="cb" style="left:16px;top:575px;width:13px;height:13px;"></div>
<span class="t" style="top:574.7px;font-size:12.5px;line-height:14px;color:#28578c;left:32px;transform:scaleX(0.835);transform-origin:0 0;">Festpreis</span>
<div class="cb" style="left:16px;top:590px;width:13px;height:13px;"></div>
<span class="t" style="top:589.7px;font-size:12.5px;line-height:14px;color:#28578c;left:32px;transform:scaleX(0.835);transform-origin:0 0;">nicht Drucken</span>
<div class="sel" style="left:130px;top:571px;width:101px;height:21px;"></div>
<span class="t" style="top:573.7px;font-size:12.5px;line-height:14px;color:#28578c;left:133px;transform:scaleX(0.835);transform-origin:0 0;">NORMAL</span>
<svg style="left:217px;top:579px" width="9" height="6" viewBox="0 0 9 6"><path d="M1 1 L4.5 4.6 L8 1" fill="none" stroke="#484848" stroke-width="1.8"/></svg>
<div class="btn" style="left:131px;top:598px;width:99px;height:19px;"></div>
<svg style="left:133px;top:599px" width="18" height="17" viewBox="0 0 18 17"><path d="M2 9 L9 1.5 L15.5 7 L8.5 14.5 Z" fill="#2e9a4a" stroke="#0b5a22" stroke-width="1"/><path d="M6 9 L9.5 5.2 L12 7.5 L8.5 11 Z" fill="#7fd48f"/><circle cx="4" cy="13" r="2" fill="#f2e24a" stroke="#8a7a10" stroke-width=".6"/><circle cx="9" cy="15" r="1.8" fill="#f2e24a" stroke="#8a7a10" stroke-width=".6"/><circle cx="14.5" cy="12.5" r="1.8" fill="#f2e24a" stroke="#8a7a10" stroke-width=".6"/></svg>
<span class="t" style="top:600.7px;font-size:12.5px;line-height:14px;color:#000;left:154px;transform:scaleX(0.835);transform-origin:0 0;">Besttarif (ctrl+b)</span>
<div style="left:247px;top:575px;width:14px;height:14px;border-radius:50%;background:radial-gradient(circle,#6a2e18 0,#6a2e18 2.6px,#e8814f 3.4px,#ee8a58 5.5px,#d9703f 7px);"></div>
<span class="t" style="top:575.0px;font-size:13px;line-height:15px;color:#000;left:265px;transform:scaleX(0.82);transform-origin:0 0;">19%</span>
<div style="left:287px;top:575px;width:14px;height:14px;border-radius:50%;background:#fff;border:1px solid #8db6da;box-shadow:0 0 0 1px #d6e5f2;"></div>
<span class="t" style="top:575.0px;font-size:13px;line-height:15px;color:#000;left:305px;transform:scaleX(0.82);transform-origin:0 0;">0%</span>
<div style="left:10px;top:621px;width:330px;height:202px;background:#fff;border:1px solid #828790;"></div>
<div style="left:11px;top:622px;width:328px;height:18px;background:#fcfcfc;"></div>
<div style="left:22px;top:623px;width:1px;height:16px;background:#e2e2e2;"></div>
<div style="left:60px;top:623px;width:1px;height:16px;background:#e2e2e2;"></div>
<div style="left:160px;top:623px;width:1px;height:16px;background:#e2e2e2;"></div>
<div style="left:187px;top:623px;width:1px;height:16px;background:#e2e2e2;"></div>
<div style="left:315px;top:623px;width:1px;height:16px;background:#e2e2e2;"></div>
<div style="left:340px;top:623px;width:1px;height:16px;background:#e2e2e2;"></div>
<div style="left:11px;top:640px;width:328px;height:1px;background:#a0a0a0;"></div>
<span class="t" style="top:624.7px;font-size:12.5px;line-height:14px;color:#000;left:26px;transform:scaleX(0.835);transform-origin:0 0;">Pos</span>
<span class="t" style="top:624.7px;font-size:12.5px;line-height:14px;color:#000;left:64px;transform:scaleX(0.835);transform-origin:0 0;">Tarif</span>
<span class="t" style="top:624.7px;font-size:12.5px;line-height:14px;color:#000;left:164px;transform:scaleX(0.835);transform-origin:0 0;">Grp</span>
<span class="t" style="top:624.7px;font-size:12.5px;line-height:14px;color:#000;left:191px;transform:scaleX(0.835);transform-origin:0 0;">Beschreibung</span>
<span class="t" style="top:624.7px;font-size:12.5px;line-height:14px;color:#000;left:319px;transform:scaleX(0.835);transform-origin:0 0;">ge</span>
<div style="left:11px;top:641px;width:11px;height:19px;background:#f0f0f0;"></div>
<div style="left:23px;top:641px;width:37px;height:19px;background:#f0f0f0;"></div>
<div style="left:61px;top:641px;width:99px;height:19px;background:#f0f0f0;"></div>
<div style="left:161px;top:641px;width:26px;height:19px;background:#f0f0f0;"></div>
<div style="left:188px;top:641px;width:127px;height:19px;background:#ffc8c8;"></div>
<div style="left:316px;top:641px;width:24px;height:19px;background:#ffc8c8;"></div>
<div style="left:22px;top:641px;width:1px;height:19px;background:#a0a0a0;"></div>
<div style="left:60px;top:641px;width:1px;height:19px;background:#a0a0a0;"></div>
<div style="left:160px;top:641px;width:1px;height:19px;background:#a0a0a0;"></div>
<div style="left:187px;top:641px;width:1px;height:19px;background:#a0a0a0;"></div>
<div style="left:315px;top:641px;width:1px;height:19px;background:#a0a0a0;"></div>
<div style="left:340px;top:641px;width:1px;height:19px;background:#a0a0a0;"></div>
<div style="left:11px;top:659px;width:329px;height:1px;background:#a0a0a0;"></div>
<span class="t" style="top:642.7px;font-size:12.5px;line-height:14px;color:#000;right:1269px;transform:scaleX(0.835);transform-origin:100% 0;">1</span>
<span class="t" style="top:642.7px;font-size:12.5px;line-height:14px;color:#000;left:63px;transform:scaleX(0.835);transform-origin:0 0;">[NORMAL]PT100</span>
<span class="t" style="top:642.7px;font-size:12.5px;line-height:14px;color:#000;left:163px;transform:scaleX(0.835);transform-origin:0 0;">A</span>
<span class="t" style="top:642.7px;font-size:12.5px;line-height:14px;color:#000;left:190px;transform:scaleX(0.835);transform-origin:0 0;">PKW Tagestarif inkl. 100</span>
<div style="left:11px;top:660px;width:11px;height:19px;background:#f0f0f0;"></div>
<div style="left:23px;top:660px;width:37px;height:19px;background:#ffc8c8;"></div>
<div style="left:61px;top:660px;width:99px;height:19px;background:#ffc8c8;"></div>
<div style="left:161px;top:660px;width:26px;height:19px;background:#ffc8c8;"></div>
<div style="left:188px;top:660px;width:127px;height:19px;background:#ffc8c8;"></div>
<div style="left:316px;top:660px;width:24px;height:19px;background:#ffc8c8;"></div>
<div style="left:22px;top:660px;width:1px;height:19px;background:#a0a0a0;"></div>
<div style="left:60px;top:660px;width:1px;height:19px;background:#a0a0a0;"></div>
<div style="left:160px;top:660px;width:1px;height:19px;background:#a0a0a0;"></div>
<div style="left:187px;top:660px;width:1px;height:19px;background:#a0a0a0;"></div>
<div style="left:315px;top:660px;width:1px;height:19px;background:#a0a0a0;"></div>
<div style="left:340px;top:660px;width:1px;height:19px;background:#a0a0a0;"></div>
<div style="left:11px;top:678px;width:329px;height:1px;background:#a0a0a0;"></div>
<span class="t" style="top:661.7px;font-size:12.5px;line-height:14px;color:#000;right:1269px;transform:scaleX(0.835);transform-origin:100% 0;">99991</span>
<span class="t" style="top:661.7px;font-size:12.5px;line-height:14px;color:#000;left:63px;transform:scaleX(0.835);transform-origin:0 0;">NS.</span>
<span class="t" style="top:661.7px;font-size:12.5px;line-height:14px;color:#000;left:163px;transform:scaleX(0.835);transform-origin:0 0;"></span>
<span class="t" style="top:661.7px;font-size:12.5px;line-height:14px;color:#000;left:190px;transform:scaleX(0.835);transform-origin:0 0;">Nettosumme</span>
<div style="left:11px;top:679px;width:11px;height:19px;background:#f0f0f0;"></div>
<div style="left:23px;top:679px;width:37px;height:19px;background:#ffc8c8;"></div>
<div style="left:61px;top:679px;width:99px;height:19px;background:#ffc8c8;"></div>
<div style="left:161px;top:679px;width:26px;height:19px;background:#ffc8c8;"></div>
<div style="left:188px;top:679px;width:127px;height:19px;background:#ffc8c8;"></div>
<div style="left:316px;top:679px;width:24px;height:19px;background:#ffc8c8;"></div>
<div style="left:22px;top:679px;width:1px;height:19px;background:#a0a0a0;"></div>
<div style="left:60px;top:679px;width:1px;height:19px;background:#a0a0a0;"></div>
<div style="left:160px;top:679px;width:1px;height:19px;background:#a0a0a0;"></div>
<div style="left:187px;top:679px;width:1px;height:19px;background:#a0a0a0;"></div>
<div style="left:315px;top:679px;width:1px;height:19px;background:#a0a0a0;"></div>
<div style="left:340px;top:679px;width:1px;height:19px;background:#a0a0a0;"></div>
<div style="left:11px;top:697px;width:329px;height:1px;background:#a0a0a0;"></div>
<span class="t" style="top:680.7px;font-size:12.5px;line-height:14px;color:#000;right:1269px;transform:scaleX(0.835);transform-origin:100% 0;">99992</span>
<span class="t" style="top:680.7px;font-size:12.5px;line-height:14px;color:#000;left:63px;transform:scaleX(0.835);transform-origin:0 0;">USt.</span>
<span class="t" style="top:680.7px;font-size:12.5px;line-height:14px;color:#000;left:163px;transform:scaleX(0.835);transform-origin:0 0;"></span>
<span class="t" style="top:680.7px;font-size:12.5px;line-height:14px;color:#000;left:190px;transform:scaleX(0.835);transform-origin:0 0;">Umsatzsteuer&nbsp; 19 %</span>
<div style="left:11px;top:698px;width:11px;height:19px;background:#f0f0f0;"></div>
<div style="left:23px;top:698px;width:37px;height:19px;background:#ffc8c8;"></div>
<div style="left:61px;top:698px;width:99px;height:19px;background:#3399ff;"></div>
<div style="left:161px;top:698px;width:26px;height:19px;background:#3399ff;"></div>
<div style="left:188px;top:698px;width:127px;height:19px;background:#3399ff;"></div>
<div style="left:316px;top:698px;width:24px;height:19px;background:#3399ff;"></div>
<div style="left:22px;top:698px;width:1px;height:19px;background:#a0a0a0;"></div>
<div style="left:60px;top:698px;width:1px;height:19px;background:#a0a0a0;"></div>
<div style="left:160px;top:698px;width:1px;height:19px;background:#a0a0a0;"></div>
<div style="left:187px;top:698px;width:1px;height:19px;background:#a0a0a0;"></div>
<div style="left:315px;top:698px;width:1px;height:19px;background:#a0a0a0;"></div>
<div style="left:340px;top:698px;width:1px;height:19px;background:#a0a0a0;"></div>
<div style="left:11px;top:716px;width:329px;height:1px;background:#a0a0a0;"></div>
<span class="t" style="top:699.7px;font-size:12.5px;line-height:14px;color:#000;right:1269px;transform:scaleX(0.835);transform-origin:100% 0;">99993</span>
<span class="t" style="top:699.7px;font-size:12.5px;line-height:14px;color:#fff;left:63px;transform:scaleX(0.835);transform-origin:0 0;">ES.</span>
<span class="t" style="top:699.7px;font-size:12.5px;line-height:14px;color:#fff;left:163px;transform:scaleX(0.835);transform-origin:0 0;"></span>
<span class="t" style="top:699.7px;font-size:12.5px;line-height:14px;color:#fff;left:190px;transform:scaleX(0.835);transform-origin:0 0;">Endsumme</span>
<svg style="left:14px;top:702px" width="6" height="10" viewBox="0 0 6 10"><path d="M0.5 0.5 L5.5 5 L0.5 9.5 Z" fill="#000"/></svg>
<div style="left:11px;top:803px;width:328px;height:19px;background:#f0f0f0;"></div>
<div style="left:12px;top:804px;width:16px;height:17px;background:#e1e1e1;border:1px solid #6d6d6d;"></div>
<svg style="left:15px;top:807px" width="10" height="10" viewBox="0 0 10 10"><path d="M5 1 V9 M1 5 H9" stroke="#14a800" stroke-width="2" fill="none"/></svg>
<div style="left:30px;top:804px;width:16px;height:17px;background:#e1e1e1;border:1px solid #6d6d6d;"></div>
<svg style="left:33px;top:807px" width="10" height="10" viewBox="0 0 10 10"><path d="M1 5 H9" stroke="#c8000a" stroke-width="2" fill="none"/></svg>
<div style="left:48px;top:804px;width:16px;height:17px;background:#f4f4f4;border:1px solid #adb2b5;"></div>
<svg style="left:51px;top:807px" width="10" height="10" viewBox="0 0 10 10"><path d="M1 5.5 L4 8.3 L9 2.2" stroke="#a8a8a8" stroke-width="1.7" fill="none"/></svg>
<div style="left:66px;top:804px;width:16px;height:17px;background:#f4f4f4;border:1px solid #adb2b5;"></div>
<svg style="left:69px;top:807px" width="10" height="10" viewBox="0 0 10 10"><path d="M1.5 1.5 L8.5 8.5 M8.5 1.5 L1.5 8.5" stroke="#a8a8a8" stroke-width="1.7" fill="none"/></svg>
<div style="left:133px;top:803px;width:17px;height:19px;background:#fff;border:1px solid #c8c8c8;"></div>
<svg style="left:137px;top:808px" width="8" height="9" viewBox="0 0 8 9"><path d="M6 1 L2 4.5 L6 8" stroke="#5a5a5a" stroke-width="1.2" fill="none"/></svg>
<div style="left:149px;top:803px;width:190px;height:19px;background:#fff;border-top:1px solid #c8c8c8;border-bottom:1px solid #c8c8c8;"></div>
<div style="left:122px;top:563px;width:116px;height:62px;border:4px solid #ec1c2b;"></div>
<svg style="left:230px;top:570px" width="125" height="90" viewBox="230 570 125 90"><path d="M236.5 597 H289 V580 L340.5 614 L289 648 V630.5 H236.5" fill="none" stroke="#ec1c2b" stroke-width="2.6" stroke-linejoin="miter"/><path d="M236.2 620 V632" stroke="#ec1c2b" stroke-width="3.5"/></svg>
<div style="left:327px;top:403px;width:1000px;height:440px;background:#1a3b6c;border-radius:6px 6px 0 0;border-left:1px solid #1f4a80;border-right:1px solid #1f4a80;"></div>
<div style="left:327px;top:403px;width:1000px;height:28px;border-radius:6px 6px 0 0;background:linear-gradient(#4077ab 0px,#376b9f 3px,#27558d 6px,#1f4880 13px,#1a3d70 21px,#19396a 28px);"></div>
<div style="left:328px;top:408px;width:1px;height:430px;background:#2b5f95;"></div>
<div style="left:1325px;top:408px;width:1px;height:430px;background:#2b5f95;"></div>
<svg style="left:335px;top:409px" width="16" height="16" viewBox="0 0 16 16"><circle cx="7.7" cy="7.7" r="7.5" fill="#e31b23"/><path d="M11.2 4.6 A4.6 4.6 0 1 0 11.6 10.5" fill="none" stroke="#fff" stroke-width="1.7"/><path d="M7.2 7.7 H12.6" stroke="#fff" stroke-width="1.7"/></svg>
<span class="t" style="top:411.3px;font-size:12px;line-height:13px;color:#fff;font-weight:bold;left:354px;transform:scaleX(1.0);transform-origin:0 0;">Rate w&auml;hlen</span>
<svg style="left:1268px;top:419px" width="9" height="3" viewBox="0 0 9 3"><rect x=".5" y="0" width="8" height="2.5" fill="#a4c8e6"/></svg>
<svg style="left:1286px;top:411px" width="13" height="11" viewBox="0 0 13 11"><rect x="1.5" y="1" width="10" height="8.5" fill="none" stroke="#a4c8e6" stroke-width="1.3"/><rect x="1.5" y="1" width="10" height="2" fill="#a4c8e6"/></svg>
<svg style="left:1305px;top:411px" width="12" height="11" viewBox="0 0 12 11"><path d="M1.5 1 L10.5 10 M10.5 1 L1.5 10" stroke="#b4d2ea" stroke-width="2.1" fill="none"/></svg>
<div style="left:334px;top:431px;width:986px;height:410px;background:#e1e8f1;"></div>
<div style="left:340px;top:437px;width:72px;height:56px;border:3px solid #ec1c2b;"></div>
<div style="left:343px;top:441px;width:66px;height:48px;background:linear-gradient(#fcb093 0px,#fba27c 2px,#f99a73 50%,#f4926a 100%);border:1px solid #c98d76;border-radius:5px;"></div>
<svg style="left:368px;top:449px" width="17" height="16" viewBox="0 0 17 16"><path d="M6.1 3.1 H11.9 L15.9 7.1 V14.9 H6.1 Z" fill="#000"/><path d="M7.1 4.1 H11 V8 H14.9 V13.9 H7.1 Z" fill="#fff"/><rect x="12.2" y="5.5" width="1.2" height="1.2" fill="#fff"/><path d="M8 7.5 h2 M8 9.5 h1 M10 9.5 h2 M13 9.5 h1 M8 11.5 h2 M11 11.5 h3" stroke="#000" stroke-width="1"/><path d="M0.9 3 H3.1 V0.3 L8.2 5.5 L3.1 10.8 V7.8 H0.9 Z" fill="#f00"/><rect x="0" y="3" width=".9" height="4.8" fill="#000"/><path d="M3.1 .3 L8.2 5.5 L3.1 10.8" fill="none" stroke="#000" stroke-width=".8" stroke-dasharray="1.2 1"/></svg>
<span class="t" style="top:468.7px;font-size:12.5px;line-height:14px;color:#000;left:176px;width:400px;text-align:center;transform:scaleX(0.835);transform-origin:50% 0;">&Uuml;bern.(F11)</span>
<div class="btn" style="left:417px;top:441px;width:66px;height:48px;"></div>
<svg style="left:443px;top:450px" width="15" height="15" viewBox="0 0 15 15"><path d="M1.5 1.5 L13 13 M13 1.5 L1.5 13" stroke="#d1492c" stroke-width="3" fill="none"/></svg>
<span class="t" style="top:469.7px;font-size:12.5px;line-height:14px;color:#000;left:250px;width:400px;text-align:center;transform:scaleX(0.835);transform-origin:50% 0;">Abbr.(ESC)</span>
<span class="t" style="top:509.2px;font-size:11px;line-height:12px;color:#2f5f9a;left:344px;transform:scaleX(0.96);transform-origin:0 0;word-spacing:0;">Von</span>
<span class="t" style="top:533.2px;font-size:11px;line-height:12px;color:#2f5f9a;left:344px;transform:scaleX(0.96);transform-origin:0 0;word-spacing:0;">Bis</span>
<div class="sel" style="left:413px;top:504px;width:133px;height:21px;"></div>
<span class="t" style="top:508.2px;font-size:11px;line-height:12px;color:#2f5f9a;left:416px;transform:scaleX(1.01);transform-origin:0 0;word-spacing:0;">16.07.2024 09:00:00</span>
<svg style="left:532px;top:511px" width="10" height="7" viewBox="0 0 10 7"><path d="M1 1 L5 5 L9 1" fill="none" stroke="#484848" stroke-width="1.9"/></svg>
<div class="sel" style="left:413px;top:528px;width:133px;height:21px;"></div>
<span class="t" style="top:532.2px;font-size:11px;line-height:12px;color:#2f5f9a;left:416px;transform:scaleX(1.01);transform-origin:0 0;word-spacing:0;">19.07.2024 09:00:00</span>
<svg style="left:532px;top:535px" width="10" height="7" viewBox="0 0 10 7"><path d="M1 1 L5 5 L9 1" fill="none" stroke="#484848" stroke-width="1.9"/></svg>
<span class="t" style="top:509.2px;font-size:11px;line-height:12px;color:#2f5f9a;left:550px;transform:scaleX(0.96);transform-origin:0 0;word-spacing:0;">Station</span>
<span class="t" style="top:533.2px;font-size:11px;line-height:12px;color:#2f5f9a;left:550px;transform:scaleX(0.96);transform-origin:0 0;word-spacing:0;">Station an</span>
<div class="sel" style="left:601px;top:504px;width:69px;height:21px;"></div>
<span class="t" style="top:508.2px;font-size:11px;line-height:12px;color:#2f5f9a;left:603px;transform:scaleX(0.96);transform-origin:0 0;word-spacing:0;">005</span>
<svg style="left:656px;top:511px" width="10" height="7" viewBox="0 0 10 7"><path d="M1 1 L5 5 L9 1" fill="none" stroke="#484848" stroke-width="1.9"/></svg>
<div class="sel" style="left:601px;top:528px;width:69px;height:21px;"></div>
<span class="t" style="top:532.2px;font-size:11px;line-height:12px;color:#2f5f9a;left:603px;transform:scaleX(0.96);transform-origin:0 0;word-spacing:0;">005</span>
<svg style="left:656px;top:535px" width="10" height="7" viewBox="0 0 10 7"><path d="M1 1 L5 5 L9 1" fill="none" stroke="#484848" stroke-width="1.9"/></svg>
<span class="t" style="top:509.2px;font-size:11px;line-height:12px;color:#2f5f9a;left:723px;transform:scaleX(0.96);transform-origin:0 0;word-spacing:0;">Preisliste</span>
<span class="t" style="top:533.2px;font-size:11px;line-height:12px;color:#2f5f9a;left:723px;transform:scaleX(0.96);transform-origin:0 0;word-spacing:0;">Kunde</span>
<div class="sel" style="left:778px;top:504px;width:145px;height:21px;"></div>
<span class="t" style="top:508.2px;font-size:11px;line-height:12px;color:#2f5f9a;left:780px;transform:scaleX(0.96);transform-origin:0 0;word-spacing:0;">NORMAL</span>
<svg style="left:909px;top:511px" width="10" height="7" viewBox="0 0 10 7"><path d="M1 1 L5 5 L9 1" fill="none" stroke="#484848" stroke-width="1.9"/></svg>
<div class="sel" style="left:778px;top:528px;width:146px;height:21px;"></div>
<span class="t" style="top:532.2px;font-size:11px;line-height:12px;color:#2f5f9a;left:781px;transform:scaleX(0.96);transform-origin:0 0;word-spacing:0;">10003</span>
<span class="t" style="top:509.2px;font-size:11px;line-height:12px;color:#2f5f9a;left:931px;transform:scaleX(0.96);transform-origin:0 0;word-spacing:0;">Kilometer</span>
<span class="t" style="top:534.2px;font-size:11px;line-height:12px;color:#2f5f9a;left:931px;transform:scaleX(0.96);transform-origin:0 0;word-spacing:0;">Gruppe</span>
<div class="sel" style="left:986px;top:504px;width:69px;height:21px;"></div>
<span class="t" style="top:508.2px;font-size:11px;line-height:12px;color:#2f5f9a;left:989px;transform:scaleX(0.96);transform-origin:0 0;word-spacing:0;">0</span>
<div class="sel" style="left:986px;top:528px;width:69px;height:21px;"></div>
<span class="t" style="top:532.2px;font-size:11px;line-height:12px;color:#2f5f9a;left:989px;transform:scaleX(0.96);transform-origin:0 0;word-spacing:0;">A</span>
<div class="btn" style="left:1235px;top:503px;width:66px;height:48px;"></div>
<svg style="left:1259px;top:510px" width="19" height="18" viewBox="0 0 19 18"><circle cx="7.5" cy="6.4" r="4.8" fill="#b9b9b9" stroke="#000" stroke-width="1.5"/><ellipse cx="9" cy="5" rx="1.1" ry=".9" fill="#fff"/><path d="M4.2 7 Q5 10 8 9.8" fill="none" stroke="#fff" stroke-width="1.2"/><path d="M11 10 L16 15" stroke="#000" stroke-width="3.4"/><path d="M12.6 9.6 L17 14" stroke="#fff" stroke-width="1" stroke-dasharray=".9 .7"/></svg>
<span class="t" style="top:530.7px;font-size:12.5px;line-height:14px;color:#000;left:1068px;width:400px;text-align:center;transform:scaleX(0.835);transform-origin:50% 0;">Suchen(F2)</span>
<div style="left:334px;top:560px;width:986px;height:36px;background:#a0a0a0;border-top:1px solid #8c8c8c;"></div>
<div style="left:341px;top:569px;width:53px;height:19px;background:#fff;border:1px solid #c4c4c4;"></div>
<span class="t" style="top:571.7px;font-size:12.5px;line-height:14px;color:#000;left:344px;transform:scaleX(0.835);transform-origin:0 0;">Sort</span>
<svg style="left:379px;top:573px" width="9" height="9" viewBox="0 0 9 9"><path d="M4.5 1 L8 8 H1 Z" fill="#f4f4f4" stroke="#9a9a9a" stroke-width=".9"/></svg>
<div style="left:334px;top:596px;width:986px;height:250px;background:#fff;"></div>
<div style="left:334px;top:596px;width:986px;height:19px;background:#fcfcfc;"></div>
<div style="left:334px;top:614px;width:986px;height:1px;background:#d8d8d8;"></div>
<div style="left:345px;top:598px;width:2px;height:15px;background:#e9e9e9;"></div>
<div style="left:350px;top:597px;width:70px;height:17px;overflow:hidden"><span class="t" style="left:0;top:1.7px;font-size:12.5px;line-height:14px;color:#000;transform:scaleX(0.835);transform-origin:0 0">Pos</span></div>
<div style="left:420px;top:598px;width:2px;height:15px;background:#e9e9e9;"></div>
<div style="left:425px;top:597px;width:81px;height:17px;overflow:hidden"><span class="t" style="left:0;top:1.7px;font-size:12.5px;line-height:14px;color:#000;transform:scaleX(0.835);transform-origin:0 0">Tarif</span></div>
<div style="left:506px;top:598px;width:2px;height:15px;background:#e9e9e9;"></div>
<div style="left:511px;top:597px;width:82px;height:17px;overflow:hidden"><span class="t" style="left:0;top:1.7px;font-size:12.5px;line-height:14px;color:#000;transform:scaleX(0.835);transform-origin:0 0">Beschreibung</span></div>
<div style="left:593px;top:598px;width:2px;height:15px;background:#e9e9e9;"></div>
<div style="left:598px;top:597px;width:47px;height:17px;overflow:hidden"><span class="t" style="left:0;top:1.7px;font-size:12.5px;line-height:14px;color:#000;transform:scaleX(0.835);transform-origin:0 0">Anzahl</span></div>
<div style="left:645px;top:598px;width:2px;height:15px;background:#e9e9e9;"></div>
<div style="left:650px;top:597px;width:51px;height:17px;overflow:hidden"><span class="t" style="left:0;top:1.7px;font-size:12.5px;line-height:14px;color:#000;transform:scaleX(0.835);transform-origin:0 0">Einheit</span></div>
<div style="left:701px;top:598px;width:2px;height:15px;background:#e9e9e9;"></div>
<div style="left:706px;top:597px;width:49px;height:17px;overflow:hidden"><span class="t" style="left:0;top:1.7px;font-size:12.5px;line-height:14px;color:#000;transform:scaleX(0.835);transform-origin:0 0">Einzelpreis</span></div>
<div style="left:755px;top:598px;width:2px;height:15px;background:#e9e9e9;"></div>
<div style="left:760px;top:597px;width:49px;height:17px;overflow:hidden"><span class="t" style="left:0;top:1.7px;font-size:12.5px;line-height:14px;color:#000;transform:scaleX(0.835);transform-origin:0 0">Brutto</span></div>
<div style="left:809px;top:598px;width:2px;height:15px;background:#e9e9e9;"></div>
<div style="left:814px;top:597px;width:51px;height:17px;overflow:hidden"><span class="t" style="left:0;top:1.7px;font-size:12.5px;line-height:14px;color:#000;transform:scaleX(0.835);transform-origin:0 0">rabatt</span></div>
<div style="left:865px;top:598px;width:2px;height:15px;background:#e9e9e9;"></div>
<div style="left:870px;top:597px;width:85px;height:17px;overflow:hidden"><span class="t" style="left:0;top:1.7px;font-size:12.5px;line-height:14px;color:#000;transform:scaleX(0.835);transform-origin:0 0">GesamtPreis</span></div>
<div style="left:955px;top:598px;width:2px;height:15px;background:#e9e9e9;"></div>
<div style="left:960px;top:597px;width:41px;height:17px;overflow:hidden"><span class="t" style="left:0;top:1.7px;font-size:12.5px;line-height:14px;color:#000;transform:scaleX(0.835);transform-origin:0 0">Kmfrei</span></div>
<div style="left:1001px;top:598px;width:2px;height:15px;background:#e9e9e9;"></div>
<div style="left:1006px;top:597px;width:84px;height:17px;overflow:hidden"><span class="t" style="left:0;top:1.7px;font-size:12.5px;line-height:14px;color:#000;transform:scaleX(0.835);transform-origin:0 0">kmZus</span></div>
<div style="left:1090px;top:598px;width:2px;height:15px;background:#e9e9e9;"></div>
<div style="left:1095px;top:597px;width:42px;height:17px;overflow:hidden"><span class="t" style="left:0;top:1.7px;font-size:12.5px;line-height:14px;color:#000;transform:scaleX(0.835);transform-origin:0 0">ZusatzEi</span></div>
<div style="left:1137px;top:598px;width:2px;height:15px;background:#e9e9e9;"></div>
<div style="left:1142px;top:597px;width:85px;height:17px;overflow:hidden"><span class="t" style="left:0;top:1.7px;font-size:12.5px;line-height:14px;color:#000;transform:scaleX(0.835);transform-origin:0 0">ZusatzPreis</span></div>
<div style="left:1227px;top:598px;width:2px;height:15px;background:#e9e9e9;"></div>
<div style="left:1232px;top:597px;width:86px;height:17px;overflow:hidden"><span class="t" style="left:0;top:1.7px;font-size:12.5px;line-height:14px;color:#000;transform:scaleX(0.835);transform-origin:0 0">SB</span></div>
<div style="left:1319px;top:596px;width:1px;height:142px;background:#c0c0c0;"></div>
<div style="left:334px;top:596px;width:12px;height:142px;background:#f0f0f0;"></div>
<div style="left:334px;top:596px;width:12px;height:19px;background:#fcfcfc;"></div>
<div style="left:346px;top:615px;width:1px;height:123px;background:#a4a4a4;"></div>
<div style="left:334px;top:596px;width:1px;height:240px;background:#8c8c8c;"></div>
<div style="left:1318px;top:596px;width:2px;height:240px;background:#a6a6a6;"></div>
<div style="left:347px;top:615px;width:972px;height:18px;background:#3399ff;outline:1px dotted #c8864a;outline-offset:-1px;"></div>
<div style="left:347px;top:632px;width:972px;height:2px;background:#a8a8a8;"></div>
<div style="left:347px;top:634px;width:972px;height:21px;background:#f0f0f0;"></div>
<div style="left:335px;top:655px;width:984px;height:1px;background:#b0b0b0;"></div>
<div style="left:350px;top:619px;width:9px;height:9px;background:linear-gradient(#fff,#dcdcdc);border:1px solid #9c9c9c;"></div>
<svg style="left:351px;top:620px" width="7" height="7" viewBox="0 0 7 7"><path d="M3.5 1 V6 M1 3.5 H6" stroke="#333" stroke-width="1"/></svg>
<span class="t" style="top:616.7px;font-size:12.5px;line-height:14px;color:#fff;left:364px;transform:scaleX(0.835);transform-origin:0 0;">Sort : 001 - [NORMAL]PT100 PKW Tagestarif inkl. 100&nbsp; KM</span>
<div style="left:757px;top:635px;width:52px;height:19px;background:#e6eaed;border:1px solid #b4b4b4;"></div>
<span class="t" style="top:637.7px;font-size:12.5px;line-height:14px;color:#000;right:521px;transform:scaleX(0.835);transform-origin:100% 0;">24,99 &euro;</span>
<div style="left:867px;top:635px;width:88px;height:19px;background:#e6eaed;border:1px solid #b4b4b4;"></div>
<span class="t" style="top:637.7px;font-size:12.5px;line-height:14px;color:#000;right:376px;transform:scaleX(0.835);transform-origin:100% 0;">63,00 &euro;</span>
<div style="left:347px;top:656px;width:972px;height:18px;background:#f0f0f0;"></div>
<div style="left:347px;top:673px;width:972px;height:2px;background:#a8a8a8;"></div>
<div style="left:347px;top:675px;width:972px;height:21px;background:#f0f0f0;"></div>
<div style="left:335px;top:696px;width:984px;height:1px;background:#b0b0b0;"></div>
<div style="left:350px;top:660px;width:9px;height:9px;background:linear-gradient(#fff,#dcdcdc);border:1px solid #9c9c9c;"></div>
<svg style="left:351px;top:661px" width="7" height="7" viewBox="0 0 7 7"><path d="M3.5 1 V6 M1 3.5 H6" stroke="#333" stroke-width="1"/></svg>
<span class="t" style="top:657.7px;font-size:12.5px;line-height:14px;color:#000;left:364px;transform:scaleX(0.835);transform-origin:0 0;">Sort : 002 - [NORMAL]PTFREI PKW Tagestarif inkl. alle KM</span>
<div style="left:757px;top:676px;width:52px;height:19px;background:#e6eaed;border:1px solid #b4b4b4;"></div>
<span class="t" style="top:678.7px;font-size:12.5px;line-height:14px;color:#000;right:521px;transform:scaleX(0.835);transform-origin:100% 0;">28,56 &euro;</span>
<div style="left:867px;top:676px;width:88px;height:19px;background:#e6eaed;border:1px solid #b4b4b4;"></div>
<span class="t" style="top:678.7px;font-size:12.5px;line-height:14px;color:#000;right:376px;transform:scaleX(0.835);transform-origin:100% 0;">72,00 &euro;</span>
<div style="left:347px;top:697px;width:972px;height:18px;background:#f0f0f0;"></div>
<div style="left:347px;top:714px;width:972px;height:2px;background:#a8a8a8;"></div>
<div style="left:347px;top:716px;width:972px;height:21px;background:#f0f0f0;"></div>
<div style="left:335px;top:737px;width:984px;height:1px;background:#b0b0b0;"></div>
<div style="left:350px;top:701px;width:9px;height:9px;background:linear-gradient(#fff,#dcdcdc);border:1px solid #9c9c9c;"></div>
<svg style="left:351px;top:702px" width="7" height="7" viewBox="0 0 7 7"><path d="M3.5 1 V6 M1 3.5 H6" stroke="#333" stroke-width="1"/></svg>
<span class="t" style="top:698.7px;font-size:12.5px;line-height:14px;color:#000;left:364px;transform:scaleX(0.835);transform-origin:0 0;">Sort : 003 - [NORMAL]MONAT 3 Monatstarif inkl. 3.000 km</span>
<div style="left:757px;top:717px;width:52px;height:19px;background:#e6eaed;border:1px solid #b4b4b4;"></div>
<span class="t" style="top:719.7px;font-size:12.5px;line-height:14px;color:#000;right:521px;transform:scaleX(0.835);transform-origin:100% 0;">549,00 &euro;</span>
<div style="left:867px;top:717px;width:88px;height:19px;background:#e6eaed;border:1px solid #b4b4b4;"></div>
<span class="t" style="top:719.7px;font-size:12.5px;line-height:14px;color:#000;right:376px;transform:scaleX(0.835);transform-origin:100% 0;">461,34 &euro;</span>
<svg style="left:339px;top:630px" width="6" height="10" viewBox="0 0 6 10"><path d="M0.5 0.5 L5.5 5 L0.5 9.5 Z" fill="#000"/></svg>
<svg style="left:230px;top:570px" width="125" height="90" viewBox="230 570 125 90"><path d="M236.5 597 H289 V580 L340.5 614 L289 648 V630.5 H236.5" fill="none" stroke="#ec1c2b" stroke-width="2.6" stroke-linejoin="miter"/><path d="M236.2 620 V632" stroke="#ec1c2b" stroke-width="3.5"/></svg>
</body></html>
